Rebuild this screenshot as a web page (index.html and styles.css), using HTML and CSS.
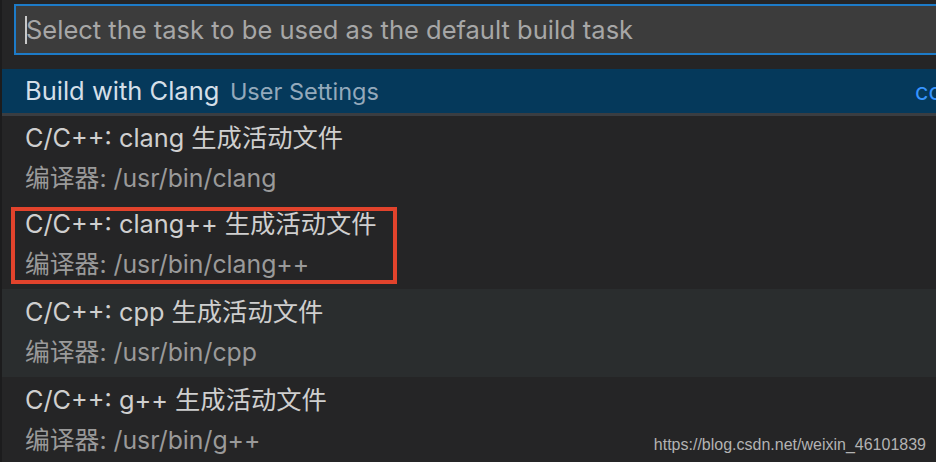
FILE: index.html
```html
<!DOCTYPE html>
<html>
<head>
    <meta charset="utf-8">
    <title>Select default build task</title>
    <link rel="stylesheet" href="styles.css">
</head>
<body>
    <div class="quick-input">
        <div class="input-box">
            <span class="caret"></span>
            <span class="placeholder">Select the task to be used as the default build task</span>
        </div>

        <div class="list">
            <div class="item selected">
                <span class="label">Build with Clang</span>
                <span class="desc">User Settings</span>
                <span class="side">configured</span>
            </div>
            <div class="item first">
                <div class="label">C/C++: clang 生成活动文件</div>
                <div class="detail">编译器: /usr/bin/clang</div>
            </div>
            <div class="item">
                <div class="label">C/C++: clang++ 生成活动文件</div>
                <div class="detail">编译器: /usr/bin/clang++</div>
                <div class="mark"></div>
            </div>
            <div class="item hover">
                <div class="label">C/C++: cpp 生成活动文件</div>
                <div class="detail">编译器: /usr/bin/cpp</div>
            </div>
            <div class="item">
                <div class="label">C/C++: g++ 生成活动文件</div>
                <div class="detail">编译器: /usr/bin/g++</div>
            </div>
        </div>
    </div>
    <div class="watermark">https://blog.csdn.net/weixin_46101839</div>
</body>
</html>
```

FILE: styles.css
```css
body {
    margin: 0;
    padding: 0;
    height: 462px;
    overflow: hidden;
    background: #252526;
    font-family: Inter, "Noto Sans CJK SC", sans-serif;
    color: #cccccc;
}
.quick-input {
    border-left: 2px solid #1c1c1d;
    height: 462px;
    overflow: hidden;
}
.input-box {
    display: flex;
    align-items: center;
    margin: 4px -20px 0 12px;
    height: 47px;
    border: 2px solid #1d7bc8;
    background: #3c3c3c;
    padding-left: 9px;
}
.caret {
    width: 2px;
    height: 28px;
    background: #c8c8c8;
}
.placeholder {
    font-size: 25.5px;
    color: #a7a7a7;
    margin-left: -1px;
    white-space: nowrap;
}
.list {
    margin-top: 14px;
}
.item {
    position: relative;
    height: 88px;
    padding-left: 23px;
    box-sizing: border-box;
}
.item.selected {
    height: 44px;
    padding-top: 2px;
    line-height: 42px;
    background: #05395b;
    white-space: nowrap;
}
.item.selected .label {
    font-size: 25.5px;
    color: #d4dfe8;
}
.item.selected .desc {
    font-size: 23.5px;
    color: #94a9bb;
    margin-left: 6px;
}
.item.selected .side {
    position: absolute;
    top: 2px;
    left: 913px;
    font-size: 23.5px;
    color: #3794ff;
}
.item.first {
    border-top: 3px solid #3a3d41;
}
.item.first .label {
    padding-top: 7px;
}
.item.hover {
    background: #2a2d2e;
}
.label {
    font-size: 25.3px;
    line-height: 30px;
    padding-top: 8px;
    color: #cfcfcf;
    white-space: nowrap;
}
.detail {
    font-size: 24.8px;
    line-height: 30px;
    padding-top: 10px;
    color: #9a9a9a;
    white-space: nowrap;
}
.mark {
    position: absolute;
    left: 9px;
    top: 6px;
    width: 378px;
    height: 69px;
    border: 4px solid #e2432c;
}
.watermark {
    position: absolute;
    right: 10px;
    bottom: 8px;
    font-family: "Liberation Sans", Arial, sans-serif;
    font-size: 16px;
    color: #b3b3b3;
}
```
